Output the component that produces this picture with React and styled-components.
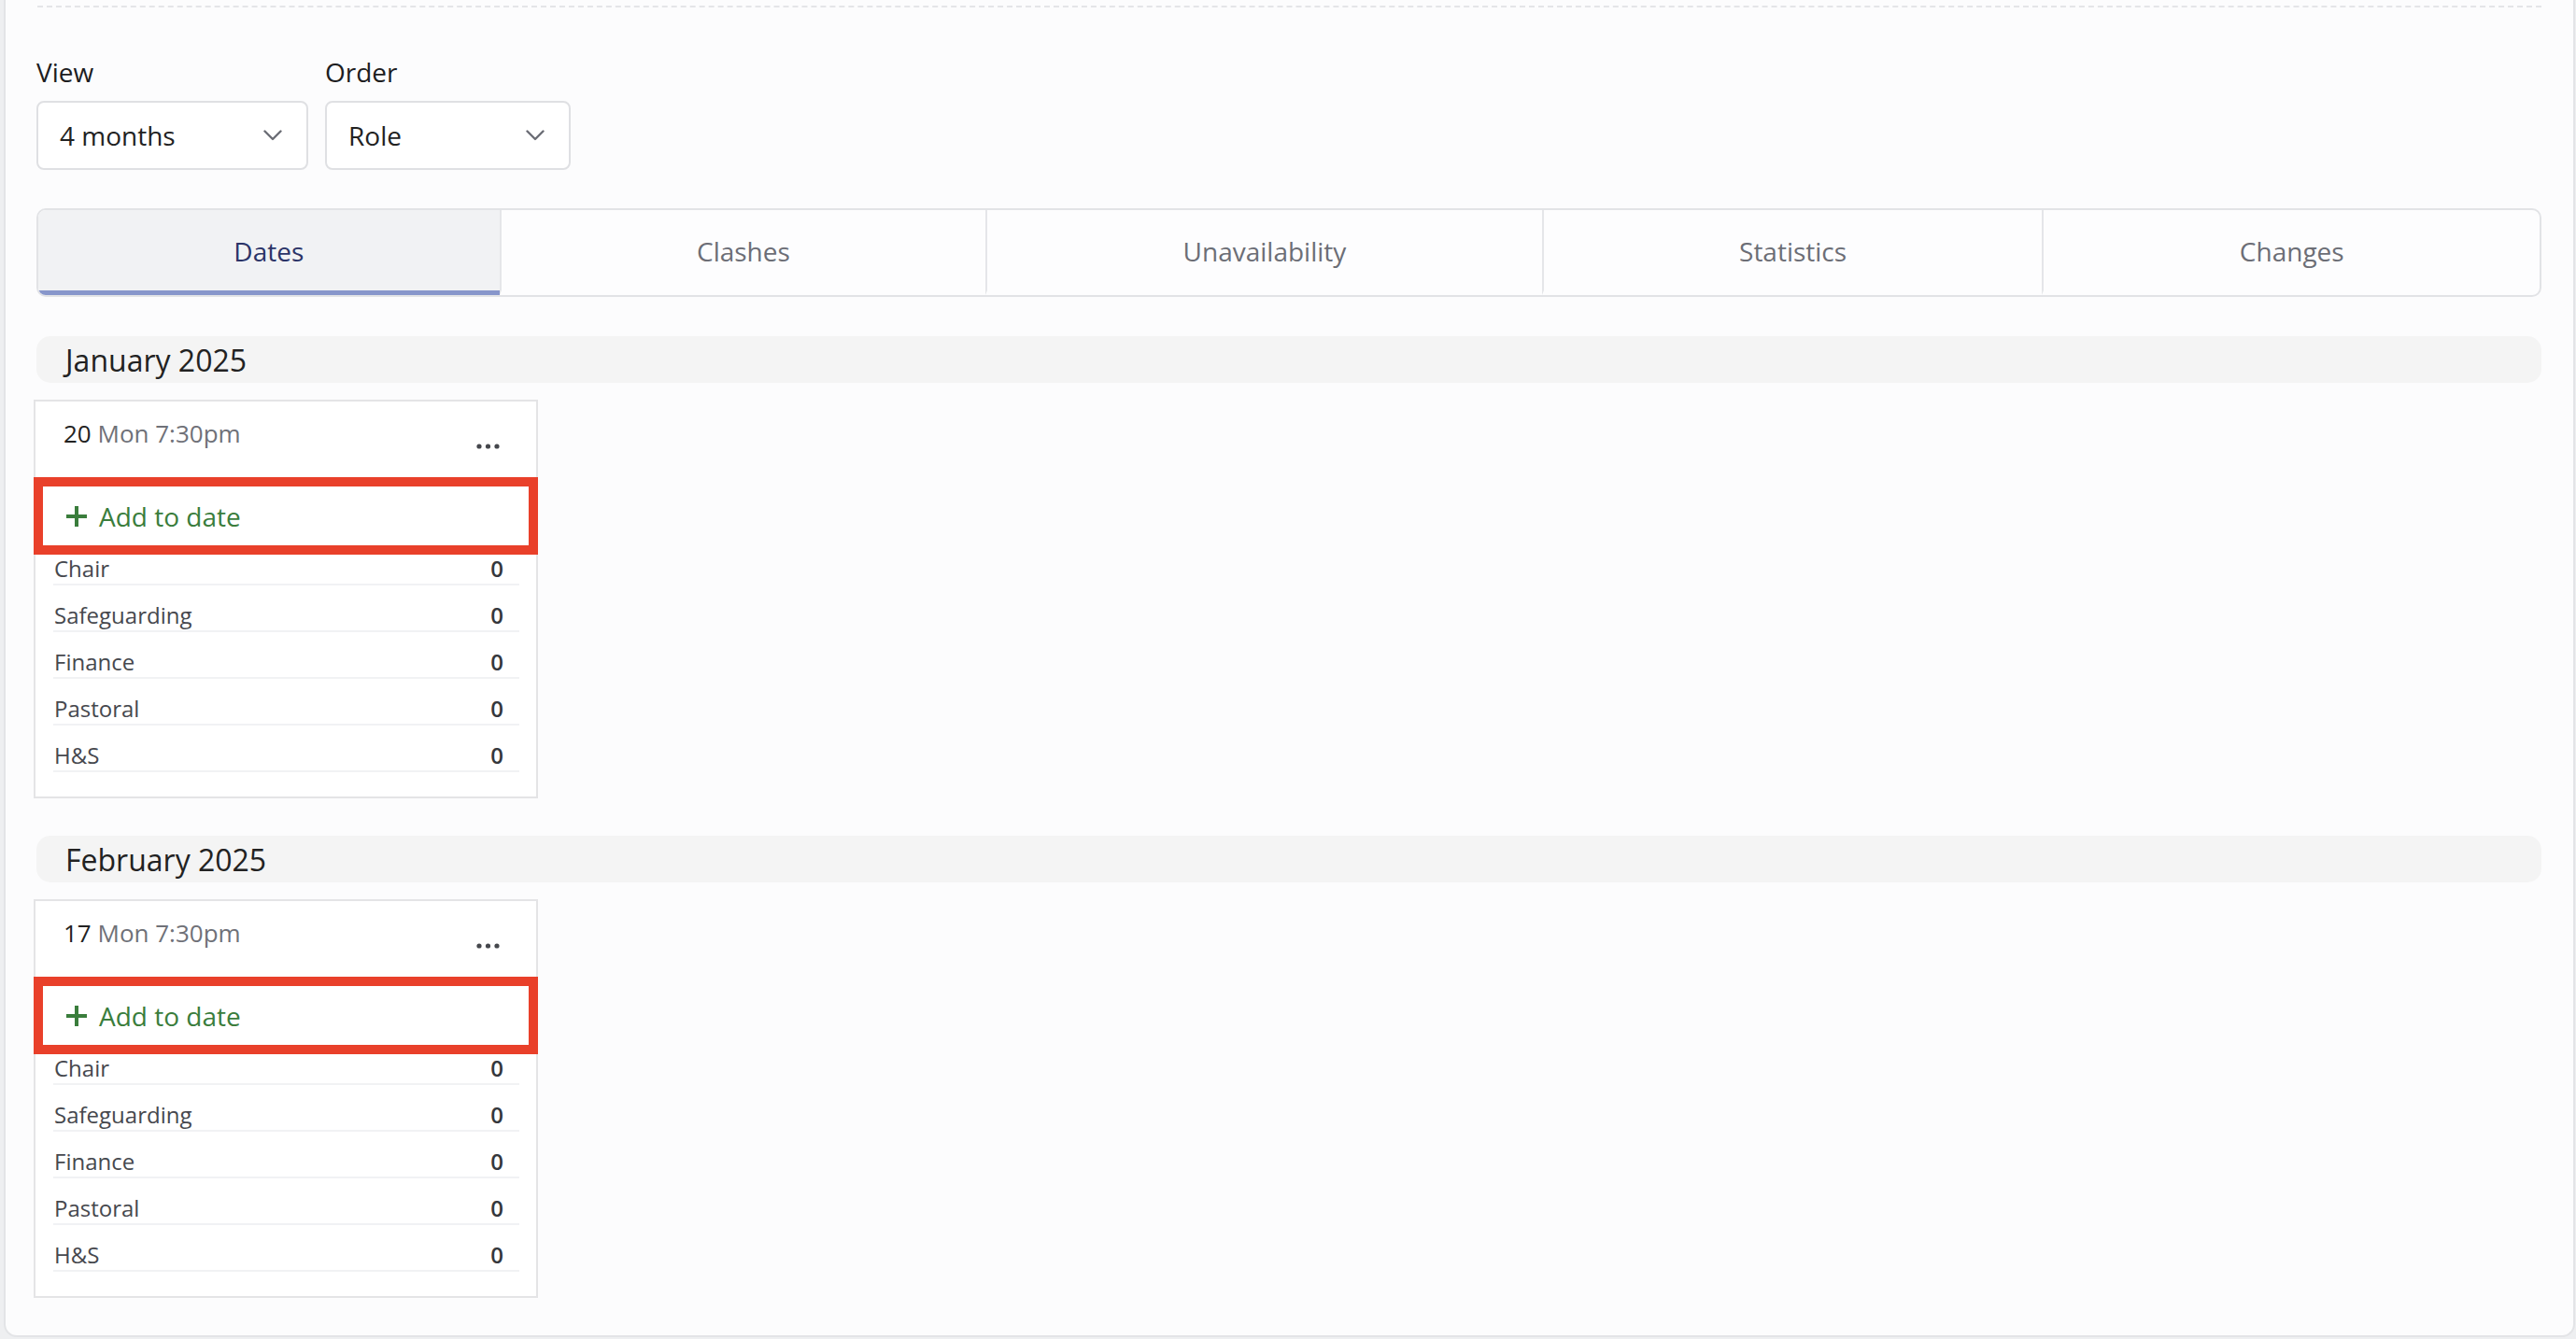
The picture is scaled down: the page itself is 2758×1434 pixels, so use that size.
import React from 'react';
import styled, { createGlobalStyle } from 'styled-components';

const GlobalStyle = createGlobalStyle`
  html, body {
    margin: 0;
    padding: 0;
    background: #eeeff1;
  }
  body {
    font-family: "Open Sans", "Noto Sans", sans-serif;
    color: #222;
  }
  * { box-sizing: border-box; }
`;

const Panel = styled.div`
  margin: 0 1px 0 4px;
  min-height: 1432px;
  background: #fcfcfd;
  border: 2px solid #e3e4e7;
  border-top: none;
  border-radius: 0 0 14px 14px;
  padding: 6px 34px 40px 32px;
`;

const Divider = styled.div`
  border-top: 2px dashed #e4e5e8;
  margin-left: 2px;
`;

const Filters = styled.div`
  display: flex;
  gap: 18px;
  margin-top: 50px;
  padding-left: 1px;
`;

const Field = styled.div`
  display: flex;
  flex-direction: column;
`;

const Label = styled.label`
  font-size: 28px;
  line-height: 38px;
  color: #1d1d1f;
  margin-bottom: 12px;
`;

const Select = styled.div`
  width: ${(p) => p.width}px;
  height: 74px;
  display: flex;
  align-items: center;
  justify-content: space-between;
  padding: 0 26px 0 23px;
  background: #fff;
  border: 2px solid #dfe0e3;
  border-radius: 8px;
  font-size: 28px;
  color: #222;
`;

const Tabs = styled.div`
  display: flex;
  margin-top: 41px;
  margin-left: 1px;
  height: 95px;
  border: 2px solid #e2e3e6;
  border-radius: 10px;
  overflow: hidden;
  background: #fdfdfe;
`;

const Tab = styled.div`
  flex: 1 1 auto;
  display: flex;
  align-items: center;
  justify-content: center;
  font-size: 28px;
  color: ${(p) => (p.active ? '#2b3468' : '#6c6e76')};
  background: ${(p) => (p.active ? '#f1f2f4' : 'transparent')};
  border-bottom: 5px solid ${(p) => (p.active ? '#8796cb' : 'transparent')};
  padding-top: 2px;
  & + & {
    border-left: 2px solid #e5e6e9;
  }
`;

const MonthHeader = styled.div`
  margin-top: ${(p) => (p.first ? 42 : 40)}px;
  margin-left: 1px;
  height: 50px;
  display: flex;
  align-items: center;
  padding-left: 31px;
  background: #f4f4f4;
  border-radius: 15px;
  font-size: 32px;
  color: #222;
`;

const Card = styled.div`
  margin-top: 18px;
  margin-left: -2px;
  width: 540px;
  background: #fff;
  border: 2px solid #e4e4e6;
  padding-bottom: 26px;
`;

const CardHead = styled.div`
  display: flex;
  justify-content: space-between;
  align-items: flex-start;
  height: 81px;
  padding: 16px 39px 0 30px;
`;

const DateText = styled.div`
  font-size: 26px;
  line-height: 36px;
  color: #6f7178;
  b {
    font-weight: 400;
    color: #222;
  }
`;

const Dots = styled.svg`
  margin-top: 29px;
`;

const AddRow = styled.div`
  margin: 0 -2px;
  height: 83px;
  border: 10px solid #e9402a;
  display: flex;
  align-items: center;
  gap: 12px;
  padding-left: 24px;
  font-size: 28px;
  color: #3a7d3c;
`;

const Roles = styled.div`
  padding: 0 18px 0 19px;
`;

const RoleRow = styled.div`
  display: flex;
  justify-content: space-between;
  align-items: flex-end;
  height: 50px;
  padding: 0 17px 1px 1px;
  border-bottom: 2px solid #f1f2f4;
  font-size: 24px;
  line-height: 30px;
  color: #46484e;
  &:first-child {
    height: 33px;
  }
`;

const Count = styled.span`
  font-weight: 600;
  color: #35373c;
`;

const Chevron = () => (
  <svg width="20" height="12" viewBox="0 0 20 12" fill="none">
    <path d="M1.5 1.5 L10 10 L18.5 1.5" stroke="#6b6d75" strokeWidth="2.4" strokeLinecap="round" strokeLinejoin="round" />
  </svg>
);

const Plus = () => (
  <svg width="24" height="24" viewBox="0 0 24 24" fill="none">
    <path d="M12 1 V23 M1 12 H23" stroke="#3a7d3c" strokeWidth="4" />
  </svg>
);

const roles = ['Chair', 'Safeguarding', 'Finance', 'Pastoral', 'H&S'];
const tabs = ['Dates', 'Clashes', 'Unavailability', 'Statistics', 'Changes'];
const months = [
  { title: 'January 2025', day: '20', time: 'Mon 7:30pm' },
  { title: 'February 2025', day: '17', time: 'Mon 7:30pm' },
];

const DateCard = ({ day, time }) => (
  <Card>
    <CardHead>
      <DateText>
        <b>{day}</b> {time}
      </DateText>
      <Dots width="25" height="6" viewBox="0 0 25 6">
        <circle cx="3" cy="3" r="2.6" fill="#45474c" />
        <circle cx="12.5" cy="3" r="2.6" fill="#45474c" />
        <circle cx="22" cy="3" r="2.6" fill="#45474c" />
      </Dots>
    </CardHead>
    <AddRow>
      <Plus />
      Add to date
    </AddRow>
    <Roles>
      {roles.map((r) => (
        <RoleRow key={r}>
          <span>{r}</span>
          <Count>0</Count>
        </RoleRow>
      ))}
    </Roles>
  </Card>
);

const App = () => {
  return (
    <>
      <GlobalStyle />
      <Panel>
        <Divider />
        <Filters>
          <Field>
            <Label>View</Label>
            <Select width={291}>
              4 months
              <Chevron />
            </Select>
          </Field>
          <Field>
            <Label>Order</Label>
            <Select width={263}>
              Role
              <Chevron />
            </Select>
          </Field>
        </Filters>
        <Tabs>
          {tabs.map((t, i) => (
            <Tab key={t} active={i === 0}>
              {t}
            </Tab>
          ))}
        </Tabs>
        {months.map((m, i) => (
          <React.Fragment key={m.title}>
            <MonthHeader first={i === 0}>{m.title}</MonthHeader>
            <DateCard day={m.day} time={m.time} />
          </React.Fragment>
        ))}
      </Panel>
    </>
  );
};

export default App;
